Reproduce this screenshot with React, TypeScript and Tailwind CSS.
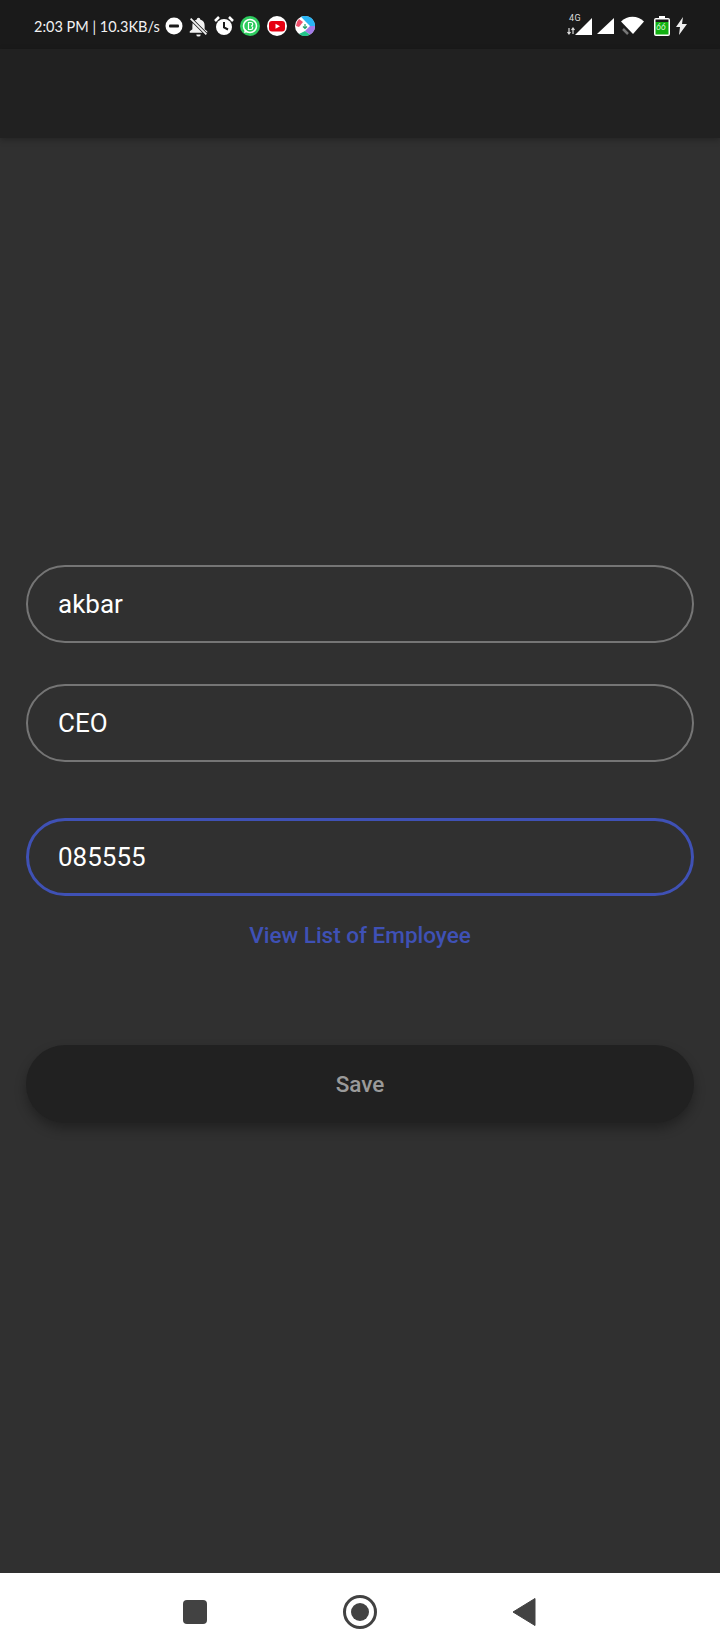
import React from "react";

const Field = ({ value, active, className = "" }: { value: string; active?: boolean; className?: string }) => (
  <div
    className={`flex h-[78px] w-full items-center rounded-full font-['Roboto',sans-serif] text-[26px] text-white ${
      active ? "border-[3px] border-[#3f51b5] pl-[29px]" : "border-2 border-[#757575] pl-[30px]"
    } ${className}`}
  >
    {value}
  </div>
);

const StatusLeft = () => (
  <div className="flex items-center">
    <span className="mt-[2px] w-[131px] whitespace-nowrap font-['Lato',sans-serif] text-[14.5px] font-normal leading-none text-[#f2f2f2]">
      2:03 PM | 10.3KB/s
    </span>
    <svg width="18" height="18" viewBox="0 0 18 18">
      <circle cx="9" cy="9" r="8.5" fill="#fff" />
      <rect x="4" y="7.5" width="10" height="3" rx="1" fill="#1a1a1a" />
    </svg>
    <svg width="21" height="21" viewBox="0 0 24 24" className="ml-[5px]">
      <path d="M12 2a2 2 0 0 1 2 2c3.500 1 5 3.500 5 7v4l3 2.500v1.500H2v-1.500L5 15v-4c0-3.500 1.500-6 5-7a2 2 0 0 1 2-2z" fill="#f2f2f2" />
      <path d="M9.500 21h5a2.500 2.500 0 0 1-5 0z" fill="#f2f2f2" />
      <path d="M3 3l18 18" stroke="#1a1a1a" strokeWidth="4" />
      <path d="M3 3l18 18" stroke="#f2f2f2" strokeWidth="2" />
    </svg>
    <svg width="20" height="20" viewBox="0 0 20 20" className="ml-[5px]">
      <circle cx="10" cy="11" r="8" fill="#fff" />
      <path d="M10 6v5.500l4 2" stroke="#1a1a1a" strokeWidth="2" fill="none" />
      <path d="M1 5l4-4M19 5l-4-4" stroke="#fff" strokeWidth="2.500" />
    </svg>
    <svg width="20" height="20" viewBox="0 0 20 20" className="ml-[6px]">
      <circle cx="10" cy="10" r="10" fill="#2ecc5f" />
      <circle cx="10" cy="10" r="6.500" fill="none" stroke="#fff" strokeWidth="1.500" />
      <path d="M4 17l1-4 3 3z" fill="#fff" />
      <path d="M8.500 6.500h2.500a1.500 1.500 0 0 1 0 3.500 1.500 1.500 0 0 1 0 3.500H8.500z" fill="none" stroke="#fff" strokeWidth="1.200" />
    </svg>
    <svg width="20" height="20" viewBox="0 0 20 20" className="ml-[7px]">
      <circle cx="10" cy="10" r="10" fill="#fff" />
      <rect x="2" y="5" width="16" height="10.500" rx="3" fill="#e60012" />
      <path d="M8.500 7.800l4.500 2.500-4.500 2.500z" fill="#fff" />
    </svg>
    <svg width="20" height="20" viewBox="0 0 20 20" className="ml-[8px]">
      <circle cx="10" cy="10" r="10" fill="#fff" />
      <path d="M6 0.800A10 10 0 0 1 20 10h-5L10 5z" fill="#29b6f6" />
      <path d="M20 10a10 10 0 0 1-5 8.660L10 15l5-5z" fill="#a27ae8" />
      <path d="M15 18.660A10 10 0 0 1 4 18l6-3z" fill="#22c58b" />
      <path d="M4 3l4 3-4 5-3-1a10 10 0 0 1 3-7z" fill="#ef4f6b" />
      <path d="M10 8v4M8 10.500l2 2 2-2" stroke="#22a06b" strokeWidth="1.200" fill="none" />
    </svg>
  </div>
);

const StatusRight = () => (
  <div className="flex items-center">
    <div className="relative h-[22px] w-[26px]">
      <span className="absolute left-[2px] top-[-2px] font-['Roboto',sans-serif] text-[9px] leading-[10px] tracking-[0.5px] text-[#ddd]">
        4G
      </span>
      <svg width="26" height="22" viewBox="0 0 26 22" className="absolute left-0 top-0">
        <path d="M8 20L25 3v17z" fill="#fff" />
        <path d="M2 13v6M0.500 17l1.500 2 1.500-2M6 19v-6M4.500 15l1.500-2 1.500 2" stroke="#ddd" strokeWidth="1.200" fill="none" />
      </svg>
    </div>
    <svg width="18" height="18" viewBox="0 0 18 18" className="ml-[4px]">
      <path d="M0 17L17 1v16z" fill="#fff" />
    </svg>
    <svg width="24" height="20" viewBox="0 0 24 20" className="ml-[6px]">
      <path d="M0 5.500C6-1 17-1 23 5.500L12 18z" fill="#fff" />
      <path d="M2 13l5 5" stroke="#777" strokeWidth="2.500" />
    </svg>
    <div className="relative ml-[9px] h-[20px] w-[16px]">
      <svg width="16" height="20" viewBox="0 0 16 20" className="absolute left-0 top-0">
        <path d="M5 0h6v2h3a2 2 0 0 1 2 2v14a2 2 0 0 1-2 2H2a2 2 0 0 1-2-2V4a2 2 0 0 1 2-2h3z" fill="#fff" />
        <rect x="1.500" y="6" width="13" height="12.500" fill="#12b012" />
        <rect x="1.500" y="3.500" width="13" height="2.500" fill="#1a1a1a" />
      </svg>
      <span className="absolute left-[2px] top-[6px] font-['Lato',sans-serif] text-[9px] italic leading-[10px] text-[#d5f5d5]">
        66
      </span>
    </div>
    <svg width="11" height="18" viewBox="0 0 11 18" className="ml-[6px]">
      <path d="M7 0L0 10h4l-1 8 8-11H6z" fill="#eee" />
    </svg>
  </div>
);

export default function App() {
  return (
    <div className="flex h-[1650px] w-[720px] flex-col overflow-hidden bg-[#303030]">
      <div className="flex h-[49px] shrink-0 items-center justify-between bg-[#1a1a1a] pl-[34px] pr-[33px] pt-[3px]">
        <StatusLeft />
        <StatusRight />
      </div>
      <div className="h-[89px] shrink-0 bg-[#212121] shadow-[0_2px_6px_rgba(0,0,0,0.25)]" />

      <div className="flex flex-1 flex-col pl-[26px] pr-[26px] pt-[427px]">
        <Field value="akbar" />
        <Field value="CEO" className="mt-[41px]" />
        <Field value="085555" active className="mt-[56px]" />
        <div className="mt-[24px] text-center font-['Roboto',sans-serif] text-[22.5px] font-medium leading-[30px] text-[#3f51b5]">
          View List of Employee
        </div>
        <button className="mt-[95px] h-[78px] w-full rounded-full bg-[#212121] pt-[2px] font-['Roboto',sans-serif] text-[22.5px] font-medium text-[#9a9a9a] shadow-[0_6px_12px_rgba(0,0,0,0.3)]">
          Save
        </button>
      </div>

      <div className="flex h-[77px] shrink-0 items-center bg-white pl-[183px]">
        <div className="h-[24px] w-[24px] rounded-[4px] bg-[#424242]" />
        <div className="ml-[136px] flex h-[34px] w-[34px] items-center justify-center rounded-full border-[3px] border-[#424242]">
          <div className="h-[18px] w-[18px] rounded-full bg-[#424242]" />
        </div>
        <svg width="24" height="30" viewBox="0 0 24 30" className="ml-[135px]">
          <path d="M23 1.500v27L1 15z" fill="#424242" stroke="#424242" strokeLinejoin="round" />
        </svg>
      </div>
    </div>
  );
}
